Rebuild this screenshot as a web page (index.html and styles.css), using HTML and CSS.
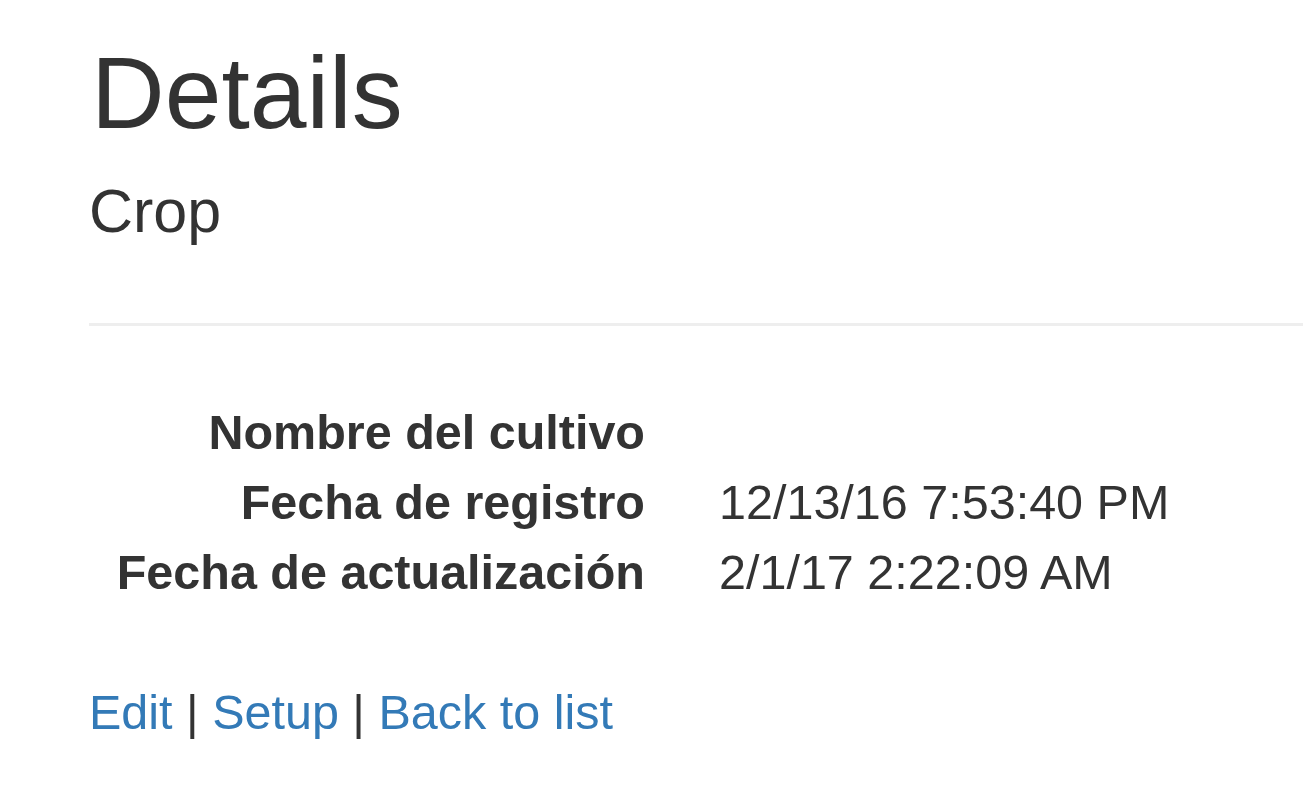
FILE: index.html
```html
<!DOCTYPE html>
<html>
<head>
<meta charset="utf-8">
<title>Details</title>
<link rel="stylesheet" href="styles.css">
</head>
<body>
<div class="container">
  <h2 class="title">Details</h2>
  <div class="record">
    <h4 class="subtitle">Crop</h4>
    <hr class="rule">
    <dl class="details">
      <dt>Nombre del cultivo</dt>
      <dd></dd>
      <dt>Fecha de registro</dt>
      <dd>12/13/16 7:53:40 PM</dd>
      <dt>Fecha de actualización</dt>
      <dd>2/1/17 2:22:09 AM</dd>
    </dl>
  </div>
  <p class="actions">
    <a href="#">Edit</a> | <a href="#">Setup</a> | <a href="#">Back to list</a>
  </p>
</div>
</body>
</html>
```

FILE: styles.css
```css
html, body {
  margin: 0;
  padding: 0;
  background: #ffffff;
}

body {
  font-family: "Liberation Sans", Arial, sans-serif;
  color: #333333;
}

.container {
  padding: 37px 0 0 89px;
}

.title {
  margin: 0 0 0 2px;
  font-size: 102px;
  font-weight: 400;
  line-height: 1.1;
  color: #333333;
}

.subtitle {
  margin: 29px 0 0 0;
  font-size: 61px;
  font-weight: 400;
  line-height: 1.1;
  color: #333333;
}

.rule {
  margin: 78px 0 0 0;
  border: 0;
  height: 3px;
  background: #eeeeee;
}

.details {
  margin: 71px 0 0 0;
  display: grid;
  grid-template-columns: 556px 1fr;
  column-gap: 74px;
  line-height: 70px;
}

.details dt {
  font-weight: 700;
  font-size: 48.5px;
  text-align: right;
  white-space: nowrap;
  color: #333333;
}

.details dd {
  margin: 0;
  font-size: 48.5px;
  min-height: 70px;
}

.actions {
  margin: 70px 0 0 0;
  font-size: 48.5px;
  line-height: 70px;
  color: #333333;
}

.actions a {
  color: #337ab7;
  text-decoration: none;
}
```
